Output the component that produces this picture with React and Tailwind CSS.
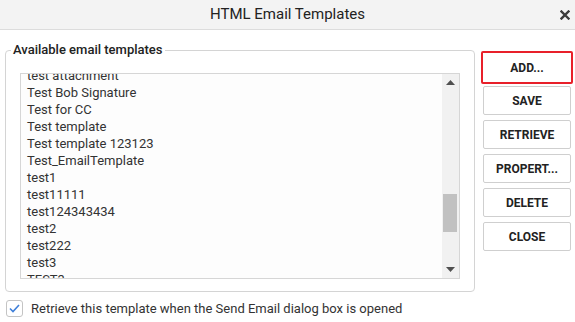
import { useEffect, useRef } from "react";

const templates = [
  "test attachment",
  "Test Bob Signature",
  "Test for CC",
  "Test template",
  "Test template 123123",
  "Test_EmailTemplate",
  "test1",
  "test11111",
  "test124343434",
  "test2",
  "test222",
  "test3",
  "TEST3",
];

const actions = ["SAVE", "RETRIEVE", "PROPERT...", "DELETE", "CLOSE"];

function CloseIcon() {
  return (
    <svg width="10" height="10" viewBox="0 0 10 10">
      <path d="M1.5 1.5 L8.5 8.5 M8.5 1.5 L1.5 8.5" stroke="#3a3a3a" strokeWidth="2.4" strokeLinecap="square" />
    </svg>
  );
}

function Scrollbar() {
  return (
    <div className="flex w-[17px] flex-col items-center bg-[#f1f1f1]">
      <div className="flex h-[17px] w-full items-center justify-center">
        <svg width="9" height="5" viewBox="0 0 9 5">
          <path d="M4.5 0 L9 5 L0 5 Z" fill="#505050" />
        </svg>
      </div>
      <div className="relative flex-1 w-full">
        <div className="absolute left-[1px] right-[2px] top-[103px] h-[38px] bg-[#c1c1c1]" />
      </div>
      <div className="flex h-[17px] w-full items-center justify-center">
        <svg width="9" height="5" viewBox="0 0 9 5">
          <path d="M0 0 L9 0 L4.5 5 Z" fill="#505050" />
        </svg>
      </div>
    </div>
  );
}

export default function App() {
  return (
    <div className="h-[322px] w-[575px] overflow-hidden bg-white font-['Roboto',_'Liberation_Sans',_sans-serif] text-[#333]">
      <div className="relative flex h-[30px] items-center justify-center border-b border-[#dcdcdc] bg-[#f3f3f3]">
        <span className="text-[15px] text-[#222]">HTML Email Templates</span>
        <span className="absolute right-[5px] top-[10px]">
          <CloseIcon />
        </span>
      </div>

      <div className="flex">
        <fieldset className="ml-[5px] mt-[12px] w-[470px] rounded-[4px] border border-[#d4d4d4] px-[14px] pb-[12px]">
          <legend className="ml-[-9px] px-[2px] text-[13px] leading-[16px] font-medium text-[#222]">
            Available email templates
          </legend>
          <div className="mt-[15px] flex h-[206px] border border-[#d6d6d6] bg-[#fdfdfd]">
            <div className="flex-1 overflow-hidden">
              <ul className="mt-[-7px] pl-[6px] text-[13px]">
                {templates.map((name) => (
                  <li key={name} className="h-[17px] leading-[17px]">
                    {name}
                  </li>
                ))}
              </ul>
            </div>
            <Scrollbar />
          </div>
        </fieldset>

        <div className="ml-[8px] mt-[21px] flex flex-col">
          <button className="ml-[-2px] h-[33px] w-[92px] rounded-[2px] border-2 border-[#e8202a] bg-white text-[12px] font-bold text-[#222]">
            ADD...
          </button>
          <div className="mt-[2px] flex flex-col gap-[5px]">
            {actions.map((label) => (
              <button
                key={label}
                className="h-[29px] w-[88px] rounded-[2px] border border-[#cfcfcf] bg-white text-[12px] font-bold text-[#222]"
              >
                {label}
              </button>
            ))}
          </div>
        </div>
      </div>

      <label className="ml-[6px] mt-[7px] flex items-center gap-[8px] text-[13px]">
        <span className="flex h-[17px] w-[17px] items-center justify-center rounded-[3px] border border-[#c4c4c4] bg-white">
          <svg width="11" height="9" viewBox="0 0 11 9">
            <path d="M1 4.5 L4 7.5 L10 1" fill="none" stroke="#3f7fd9" strokeWidth="1.6" />
          </svg>
        </span>
        Retrieve this template when the Send Email dialog box is opened
      </label>
    </div>
  );
}
